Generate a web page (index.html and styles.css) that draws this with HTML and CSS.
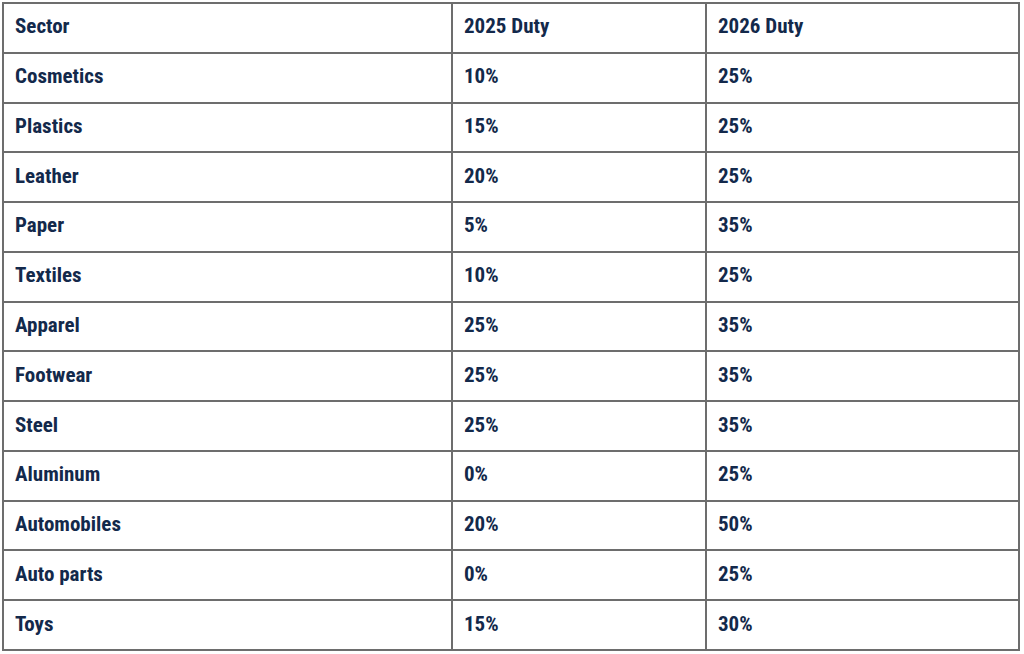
FILE: index.html
```html
<!DOCTYPE html>
<html>
<head>
<meta charset="utf-8">
<link rel="stylesheet" href="styles.css">
</head>
<body>
<table class="duty-table">
  <colgroup>
    <col class="col-sector">
    <col class="col-2025">
    <col class="col-2026">
  </colgroup>
  <tbody>
    <tr><td>Sector</td><td>2025 Duty</td><td>2026 Duty</td></tr>
    <tr><td>Cosmetics</td><td>10%</td><td>25%</td></tr>
    <tr><td>Plastics</td><td>15%</td><td>25%</td></tr>
    <tr><td>Leather</td><td>20%</td><td>25%</td></tr>
    <tr><td>Paper</td><td>5%</td><td>35%</td></tr>
    <tr><td>Textiles</td><td>10%</td><td>25%</td></tr>
    <tr><td>Apparel</td><td>25%</td><td>35%</td></tr>
    <tr><td>Footwear</td><td>25%</td><td>35%</td></tr>
    <tr><td>Steel</td><td>25%</td><td>35%</td></tr>
    <tr><td>Aluminum</td><td>0%</td><td>25%</td></tr>
    <tr><td>Automobiles</td><td>20%</td><td>50%</td></tr>
    <tr><td>Auto parts</td><td>0%</td><td>25%</td></tr>
    <tr><td>Toys</td><td>15%</td><td>30%</td></tr>
  </tbody>
</table>
</body>
</html>
```

FILE: styles.css
```css
html, body {
  margin: 0;
  padding: 0;
  background: #ffffff;
}

body {
  padding: 2px 0 0 2px;
}

.duty-table {
  border-collapse: collapse;
  table-layout: fixed;
  width: 1016px;
  font-family: "Roboto Condensed", "DejaVu Sans Condensed", sans-serif;
  font-weight: bold;
  font-size: 21px;
  color: #13294b;
}

.col-sector { width: 449px; }
.col-2025 { width: 254px; }
.col-2026 { width: 313px; }

.duty-table td {
  border: 2px solid #6d6d6d;
  height: 44.77px;
  padding: 0 0 3px 11px;
  vertical-align: middle;
  line-height: 24px;
  white-space: nowrap;
}
```
